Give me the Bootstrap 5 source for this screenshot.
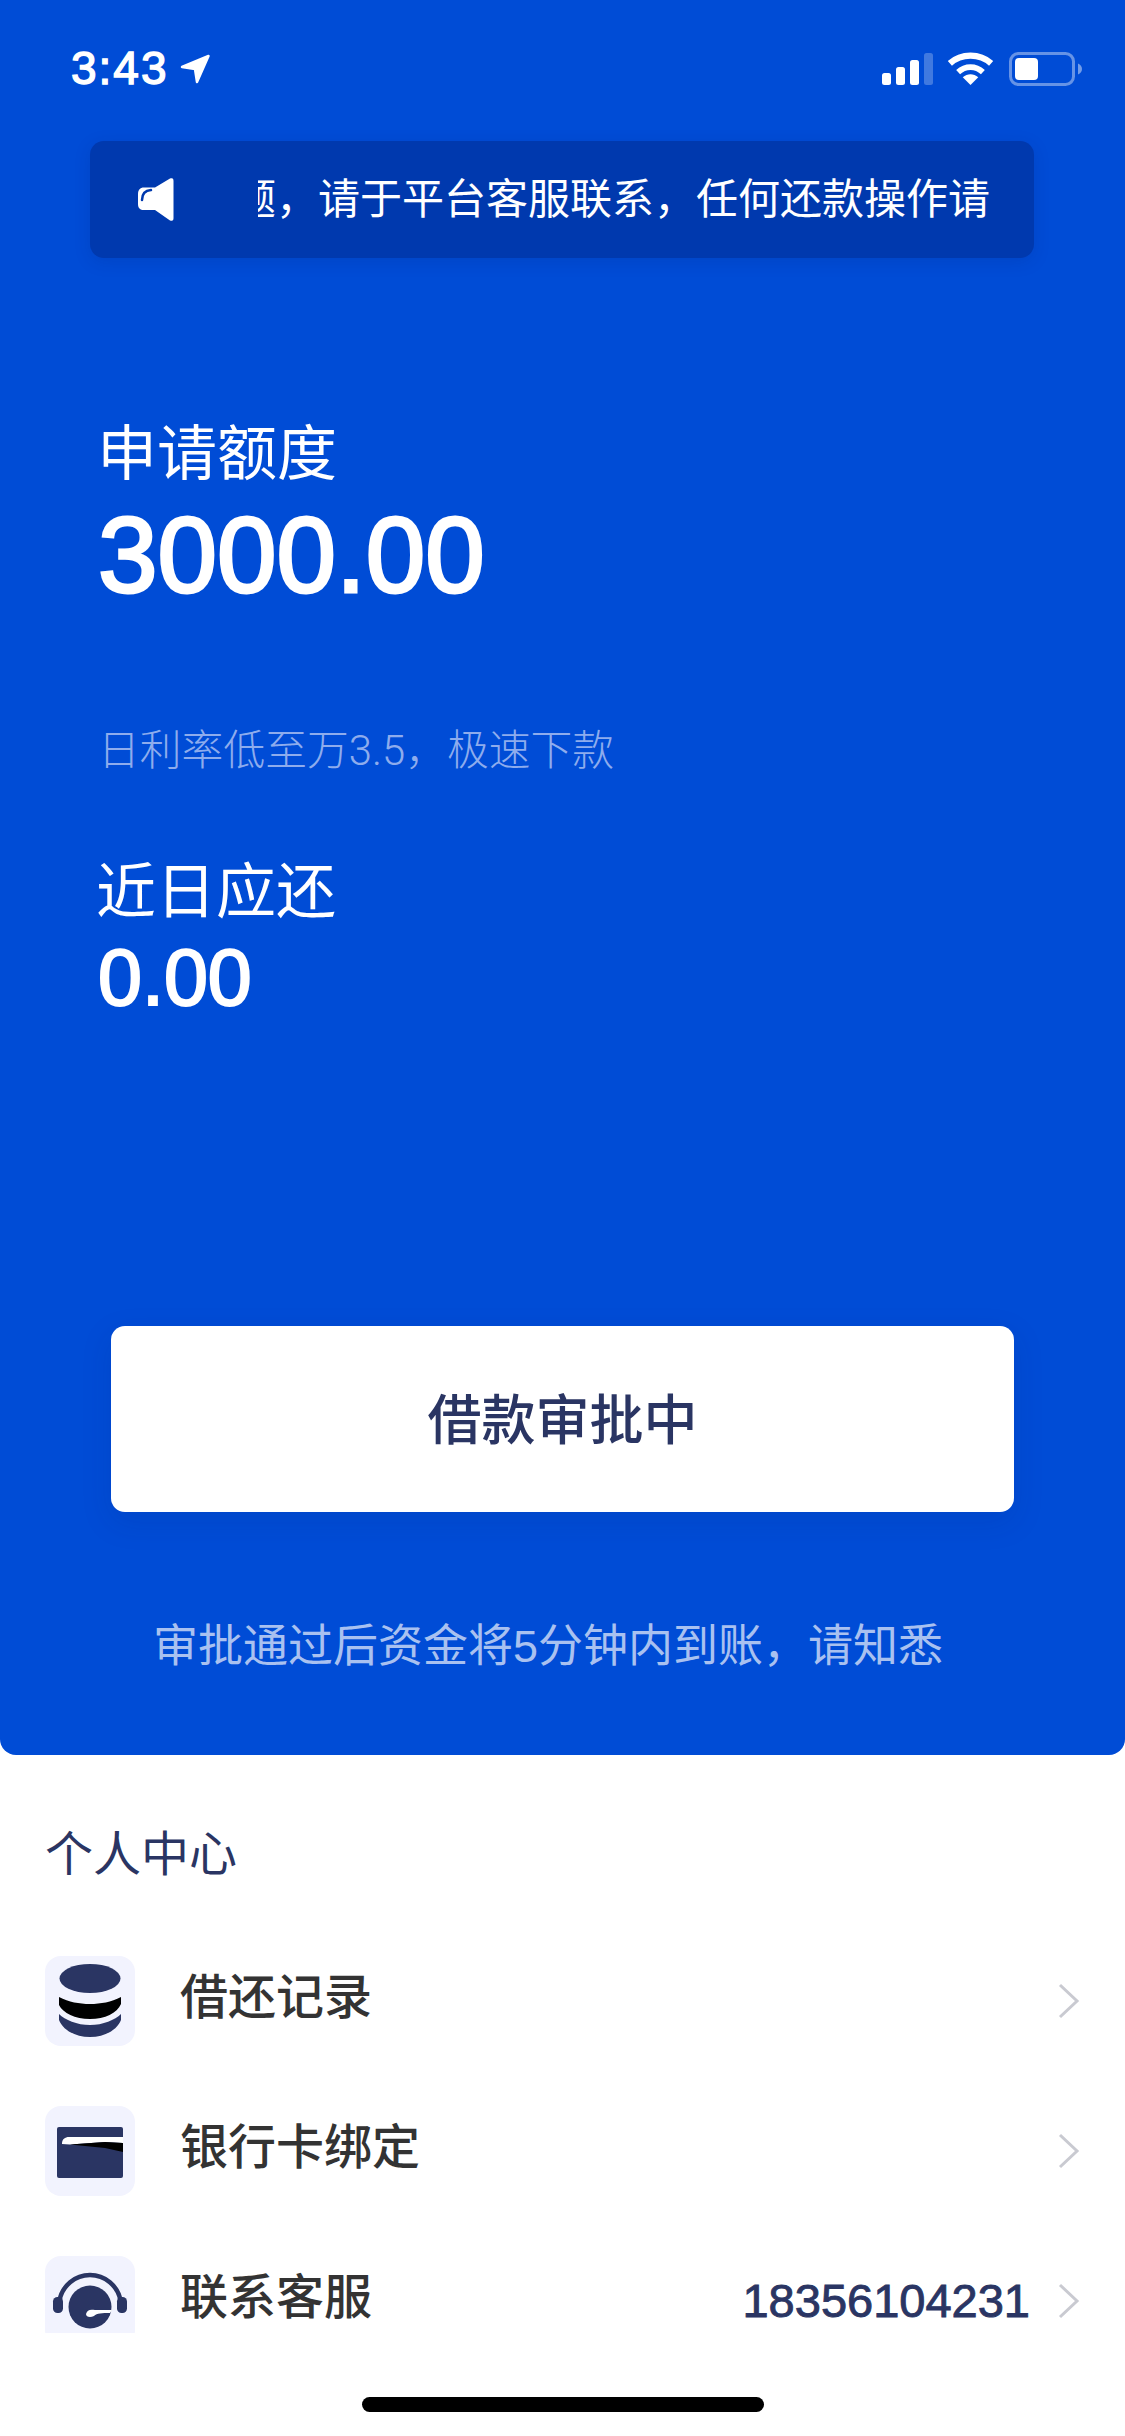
<!DOCTYPE html>
<html lang="zh-CN">
<head>
  <meta charset="UTF-8">
  <meta name="viewport" content="width=device-width, initial-scale=1.0">
  <title>个人中心</title>
  <link href="https://cdn.jsdelivr.net/npm/bootstrap@5.3.0/dist/css/bootstrap.min.css" rel="stylesheet">
  <style>
    body {
      background-color: #fff;
      font-family: "Liberation Sans", "Noto Sans CJK SC", sans-serif;
      width: 1125px;
    }
    .hero-panel {
      height: 1755px;
      background-color: #004cd6;
      border-radius: 0 0 16px 16px;
      color: #fff;
    }
    .status-row {
      height: 141px;
      padding: 48px 43px 0 71px;
    }
    .status-time {
      font-size: 46px;
      line-height: 40px;
      letter-spacing: 2px;
      -webkit-text-stroke: 1.4px #fff;
    }
    .location-arrow { width: 31px; height: 30px; margin: 6px 0 0 11px; }
    .signal-icon { width: 51px; height: 32px; margin-top: 5px; }
    .wifi-icon { width: 47px; height: 33px; margin: 4px 0 0 14px; }
    .battery-icon { width: 73px; height: 34px; margin: 4px 0 0 15px; }
    .notice-bar {
      height: 117px;
      margin: 0 91px 0 90px;
      padding-left: 48px;
      background-color: #0039ae;
      border-radius: 14px;
      box-shadow: 0 4px 16px rgba(0, 40, 130, .18);
    }
    .notice-icon { width: 36px; height: 43px; flex: none; }
    .notice-clip {
      width: 734px;
      margin-left: 84px;
      overflow: hidden;
      white-space: nowrap;
      font-size: 42px;
      line-height: 60px;
    }
    .notice-clip span { margin-left: -24px; display: inline-block; }
    .hero-label { font-size: 60px; line-height: 70px; padding-left: 97px; }
    .label-apply { margin-top: 162px; }
    .label-due { margin-top: 82px; padding-left: 96px; }
    .amount-main {
      margin-top: 10px;
      padding-left: 98px;
      font-size: 107px;
      line-height: 110px;
      -webkit-text-stroke: 3px #fff;
    }
    .rate-note {
      margin-top: 116px;
      padding-left: 98px;
      font-family: Roboto, "Noto Sans CJK SC", sans-serif;
      font-size: 41.8px;
      font-weight: 300;
      line-height: 50px;
      color: #8eaced;
    }
    .amount-due {
      margin-top: 5px;
      padding-left: 98px;
      font-size: 79px;
      line-height: 90px;
      -webkit-text-stroke: 2.2px #fff;
    }
    .apply-btn {
      display: block;
      width: 903px;
      height: 186px;
      margin: 303px 0 0 111px;
      padding-top: 6px;
      border: 0;
      border-radius: 14px;
      background-color: #fff;
      color: #2a3563;
      font-size: 54px;
      font-weight: 500;
      box-shadow: 0 10px 30px rgba(0, 40, 130, .15);
    }
    .arrive-note {
      margin-top: 110px;
      padding-left: 153px;
      font-size: 45px;
      line-height: 50px;
      color: #a9c1f0;
    }
    .center-title {
      margin: 70px 0 0 45px;
      font-size: 48px;
      line-height: 60px;
      color: #2a3563;
    }
    .menu-clip {
      height: 377px;
      margin-top: 71px;
      padding: 0 45px;
      overflow: hidden;
      row-gap: 60px;
    }
    .menu-row { height: 90px; flex: none; }
    .menu-icon {
      width: 90px;
      height: 90px;
      flex: none;
      background-color: #f2f3fe;
      border-radius: 16px;
    }
    .menu-label { margin: -6px 0 0 45px; font-size: 48px; font-weight: 500; line-height: 80px; color: #333; }
    .menu-phone {
      margin-right: 28px;
      font-size: 47px;
      line-height: 80px;
      color: #2a3563;
      -webkit-text-stroke: .9px #2a3563;
    }
    .menu-chevron { width: 22px; height: 36px; flex: none; }
    .home-bar {
      width: 402px;
      height: 15px;
      margin: 64px 0 0 362px;
      background-color: #000;
      border-radius: 8px;
    }
  </style>
</head>
<body>

  <!-- Blue panel -->
  <div class="hero-panel">
    <div class="status-row d-flex">
      <div class="status-time">3:43</div>
      <svg class="location-arrow" viewBox="0 0 31 30"><path d="M2 13 28.500 2 17 28 15 15Z" fill="#fff" stroke="#fff" stroke-width="2.500" stroke-linejoin="round"/></svg>
      <div class="ms-auto d-flex">
        <svg class="signal-icon" viewBox="0 0 51 32">
          <rect x="0" y="20" width="9" height="12" rx="2.5" fill="#fff"/>
          <rect x="14" y="14" width="9" height="18" rx="2.5" fill="#fff"/>
          <rect x="28" y="7" width="9" height="25" rx="2.5" fill="#fff"/>
          <rect x="42" y="0" width="9" height="32" rx="2.5" fill="#fff" opacity=".25"/>
        </svg>
        <svg class="wifi-icon" viewBox="0 0 45 32">
          <path d="M22.500 32 15 24.500C19.500 20.500 25.500 20.500 30 24.500Z" fill="#fff"/>
          <path d="M10.500 19.500C17.500 13 27.500 13 34.500 19.500" fill="none" stroke="#fff" stroke-width="5.6"/>
          <path d="M2.500 11C13.500 1 31.500 1 42.500 11" fill="none" stroke="#fff" stroke-width="6"/>
        </svg>
        <svg class="battery-icon" viewBox="0 0 73 34">
          <rect x="1.5" y="1.5" width="63" height="31" rx="8" fill="none" stroke="#fff" stroke-opacity=".4" stroke-width="3"/>
          <rect x="6" y="6" width="23" height="22" rx="4" fill="#fff"/>
          <path d="M69 11.500C71.500 12.500 73 14.500 73 17S71.500 21.500 69 22.500Z" fill="#fff" opacity=".45"/>
        </svg>
      </div>
    </div>

    <!-- Notice -->
    <div class="notice-bar d-flex align-items-center">
      <svg class="notice-icon" viewBox="0 0 36 43">
        <path d="M32 .5C35 -.5 35.500 1 35.500 3V40C35.500 42 35 43.500 32 42.500L17 32H6C2 32 0 30 0 26V16C0 12 2 9.500 6 9.500H17Z" fill="#fff"/>
        <path d="M4 22C4 16 7 12.500 13 12" fill="none" stroke="#0039ae" stroke-width="2.500" stroke-linecap="round"/>
      </svg>
      <div class="notice-clip"><span>题，请于平台客服联系，任何还款操作请</span></div>
    </div>

    <div class="hero-label label-apply">申请额度</div>
    <div class="amount-main">3000.00</div>
    <div class="rate-note">日利率低至万3.5，极速下款</div>
    <div class="hero-label label-due">近日应还</div>
    <div class="amount-due">0.00</div>

    <button type="button" class="apply-btn">借款审批中</button>
    <div class="arrive-note">审批通过后资金将5分钟内到账，请知悉</div>
  </div>

  <!-- Personal centre -->
  <div class="center-title">个人中心</div>
  <div class="menu-clip d-flex flex-column">
    <div class="menu-row d-flex align-items-center">
      <svg class="menu-icon" viewBox="0 0 90 90">
        <ellipse cx="45" cy="22.5" rx="30.5" ry="14.5" fill="#2a3563"/>
        <path d="M14 41C24 46 34 48 45 48S66 46 76 41V48C72 57 60 63 45 63S18 57 14 49Z" fill="#000"/>
        <path d="M14 58C20 64 32 69 45 69S70 64 76 58V64C72 74 60 81 45 81S18 74 14 64Z" fill="#2a3563"/>
      </svg>
      <div class="menu-label flex-grow-1">借还记录</div>
      <svg class="menu-chevron" viewBox="0 0 22 36"><path d="M2 2 19 18 2 34" fill="none" stroke="#c9cad1" stroke-width="3"/></svg>
    </div>
    <div class="menu-row d-flex align-items-center">
      <svg class="menu-icon" viewBox="0 0 90 90">
        <rect x="12" y="21" width="66" height="51" rx="2" fill="#2a3563"/>
        <path d="M17 38C17 33 20 31 24 31H78V37L60 36 25 38.500Z" fill="#fff"/>
        <path d="M78 37 60 36 25 38.500 60 42 78 46Z" fill="#000"/>
      </svg>
      <div class="menu-label flex-grow-1">银行卡绑定</div>
      <svg class="menu-chevron" viewBox="0 0 22 36"><path d="M2 2 19 18 2 34" fill="none" stroke="#c9cad1" stroke-width="3"/></svg>
    </div>
    <div class="menu-row d-flex align-items-center">
      <svg class="menu-icon" viewBox="0 0 90 90">
        <circle cx="45" cy="51" r="21.5" fill="#2a3563"/>
        <path d="M14.500 44.500A31 31 0 0 1 75.500 44.500" fill="none" stroke="#2a3563" stroke-width="4.500"/>
        <rect x="8" y="41" width="10" height="16" rx="4.5" fill="#2a3563"/>
        <rect x="72" y="41" width="10" height="16" rx="4.5" fill="#2a3563"/>
        <path d="M41 58C42 54 45 53 50 54L67 54 65 57C57 57 52 57 49 60 45 62 41 61 41 58Z" fill="#fff"/>
      </svg>
      <div class="menu-label flex-grow-1">联系客服</div>
      <div class="menu-phone">18356104231</div>
      <svg class="menu-chevron" viewBox="0 0 22 36"><path d="M2 2 19 18 2 34" fill="none" stroke="#c9cad1" stroke-width="3"/></svg>
    </div>
  </div>
  <div class="home-bar"></div>

  <script src="https://cdn.jsdelivr.net/npm/bootstrap@5.3.0/dist/js/bootstrap.bundle.min.js"></script>
</body>
</html>
